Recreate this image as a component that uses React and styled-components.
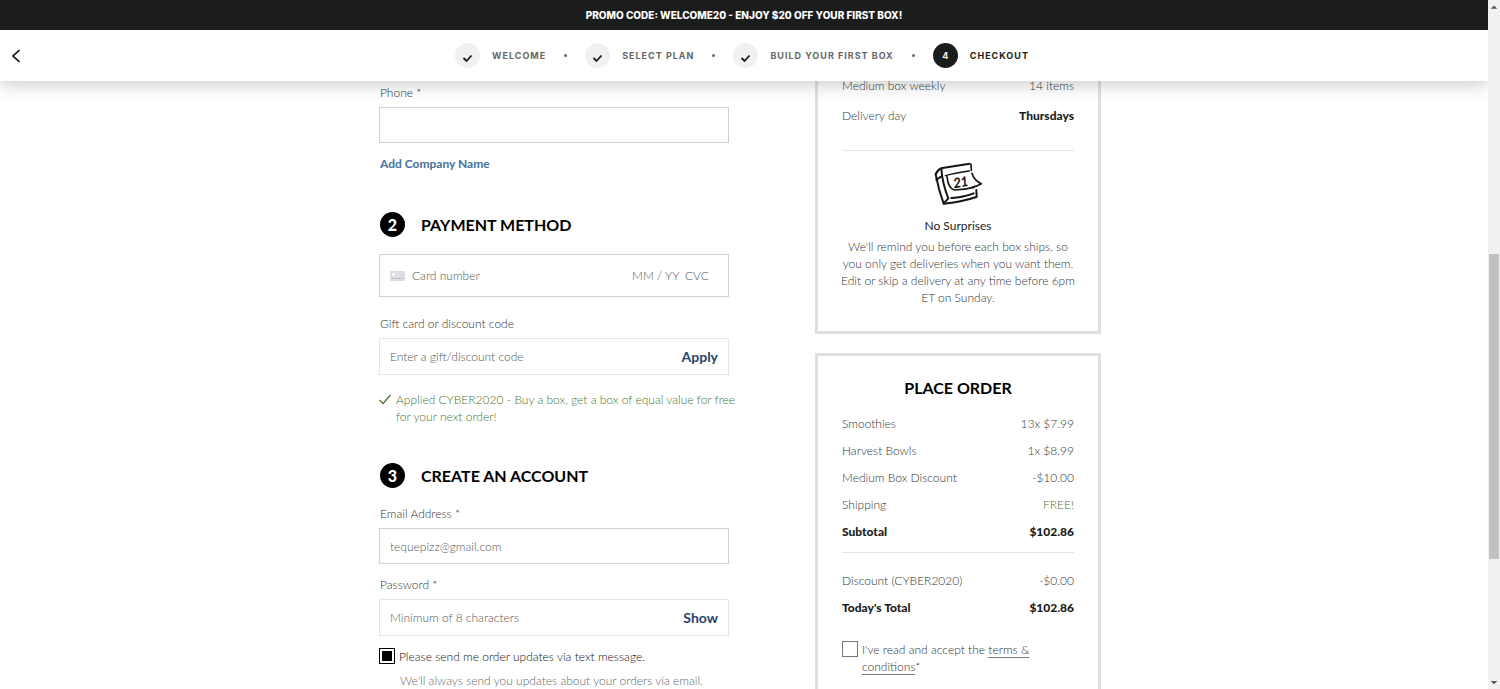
import { Fragment, useState } from 'react'
import styled, { createGlobalStyle } from 'styled-components'

const steps = ['Welcome', 'Select plan', 'Build your first box', 'Checkout']

const orderLines = [
  { name: 'Smoothies', value: '13x $7.99' },
  { name: 'Harvest Bowls', value: '1x $8.99' },
  { name: 'Medium Box Discount', value: '-$10.00' },
  { name: 'Shipping', value: 'FREE!', free: true },
  { name: 'Subtotal', value: '$102.86', bold: true },
]

const totalLines = [
  { name: 'Discount (CYBER2020)', value: '-$0.00' },
  { name: "Today's Total", value: '$102.86', bold: true },
]

export default function App() {
  return (
    <Page>
      <GlobalStyle />
      <Screen>
        <Header />
        <Main>
          <CheckoutForm />
          <Sidebar>
            <BoxSummary />
            <PlaceOrder />
          </Sidebar>
        </Main>
      </Screen>
      <ScrollTrack aria-hidden="true">
        <ScrollArrow viewBox="0 0 13 14">
          <path d="M3 9 L6.5 5.5 L10 9 Z" fill="#555" />
        </ScrollArrow>
        <ScrollThumb />
        <ScrollArrow viewBox="0 0 13 14">
          <path d="M3 6 L10 6 L6.5 9.5 Z" fill="#555" />
        </ScrollArrow>
      </ScrollTrack>
    </Page>
  )
}

function Header() {
  return (
    <HeaderWrapper>
      <Promo>Promo code: WELCOME20 - Enjoy $20 off your first box!</Promo>
      <Nav>
        <BackButton type="button" aria-label="Back">
          <svg width="10" height="16" viewBox="0 0 10 16" fill="none">
            <path d="M8.5 2 L2 8 L8.5 14" stroke="#111" strokeWidth="1.7" />
          </svg>
        </BackButton>
        <Steps>
          {steps.map((step, index) => {
            const active = index === steps.length - 1
            return (
              <Fragment key={step}>
                {index > 0 && <Dot />}
                <Step $active={active}>
                  <StepCircle $active={active}>
                    {active ? index + 1 : <StepCheck />}
                  </StepCircle>
                  {step}
                </Step>
              </Fragment>
            )
          })}
        </Steps>
      </Nav>
    </HeaderWrapper>
  )
}

function StepCheck() {
  return (
    <svg width="25" height="25" viewBox="0 0 25 25" fill="none">
      <path d="M8.5 15 L11.5 18 L16.5 12.5" stroke="#1b1d1c" strokeWidth="1.8" />
    </svg>
  )
}

function CheckoutForm() {
  const [updates, setUpdates] = useState(true)
  const [visible, setVisible] = useState(false)

  return (
    <Form onSubmit={event => event.preventDefault()}>
      <Label htmlFor="phone">Phone *</Label>
      <Field>
        <Input id="phone" type="tel" />
      </Field>
      <CompanyLink href="#company">Add Company Name</CompanyLink>

      <SectionTitle>
        <Badge>2</Badge>
        Payment method
      </SectionTitle>
      <CardField>
        <CardIcon />
        <Input aria-label="Card number" placeholder="Card number" />
        <ShortInput aria-label="Expiry date" placeholder="MM / YY" $width={53} />
        <ShortInput aria-label="CVC" placeholder="CVC" $width={35} />
      </CardField>
      <Label htmlFor="code">Gift card or discount code</Label>
      <ActionField>
        <Input id="code" placeholder="Enter a gift/discount code" />
        <FieldButton type="button">Apply</FieldButton>
      </ActionField>
      <Applied>
        <svg width="12" height="17" viewBox="0 0 12 17" fill="none">
          <path d="M0.5 9 L4 12.5 L11.5 4" stroke="#4f7438" strokeWidth="1.3" />
        </svg>
        <span>
          Applied CYBER2020 - Buy a box, get a box of equal value for free for
          your next order!
        </span>
      </Applied>

      <SectionTitle>
        <Badge>3</Badge>
        Create an account
      </SectionTitle>
      <Label htmlFor="email">Email Address *</Label>
      <Field>
        <Input id="email" type="email" placeholder="tequepizz@gmail.com" />
      </Field>
      <Label htmlFor="password">Password *</Label>
      <ActionField>
        <Input
          id="password"
          type={visible ? 'text' : 'password'}
          placeholder="Minimum of 8 characters"
        />
        <FieldButton type="button" onClick={() => setVisible(!visible)}>
          Show
        </FieldButton>
      </ActionField>
      <CheckLabel $dark>
        <Checkbox
          type="checkbox"
          checked={updates}
          onChange={() => setUpdates(!updates)}
        />
        Please send me order updates via text message.
      </CheckLabel>
      <Note>We'll always send you updates about your orders via email.</Note>
    </Form>
  )
}

function CardIcon() {
  return (
    <svg width="15" height="10" viewBox="0 0 15 10" aria-hidden="true">
      <rect width="15" height="10" rx="1" fill="#dcdee2" />
      <rect x="2" y="2" width="3" height="3" fill="#fff" />
      <path d="M2 7.5 H13" stroke="#b9bcc4" strokeDasharray="2.3 0.6" />
    </svg>
  )
}

function BoxSummary() {
  return (
    <Card>
      <Rows>
        <Row>
          <dt>Medium box weekly</dt>
          <dd>14 items</dd>
        </Row>
        <DeliveryRow>
          <dt>Delivery day</dt>
          <DeliveryDay>Thursdays</DeliveryDay>
        </DeliveryRow>
      </Rows>
      <Reminder>
        <CalendarIcon />
        <ReminderTitle>No Surprises</ReminderTitle>
        <ReminderText>
          We'll remind you before each box ships, so you only get deliveries
          when you want them. Edit or skip a delivery at any time before 6pm ET
          on Sunday.
        </ReminderText>
      </Reminder>
    </Card>
  )
}

function CalendarIcon() {
  return (
    <svg
      width="48"
      height="44"
      viewBox="0 0 144 132"
      fill="none"
      stroke="#151515"
      strokeWidth="6"
      strokeLinecap="round"
      strokeLinejoin="round"
      aria-hidden="true"
    >
      <path d="M5 37 Q10 24 21 19 Q60 12 107 5" />
      <path d="M5 37 Q14 85 29 125 Q80 121 127 105" />
      <path d="M22 21 Q26 68 43 109 L29 124" />
      <path d="M7 53 L24 42" />
      <path d="M52 108 Q88 106 119 94 M127 84 L128 104" />
      <path d="M34 41 Q62 33 106 27" strokeWidth="4" />
      <path d="M39 44 Q42 79 61 84 Q92 83 120 76" strokeWidth="5" />
      <path d="M111 7 L112 25 M114 34 Q120 56 142 65 Q130 72 116 75" strokeWidth="5" />
      <CalendarDay x="61" y="77" transform="rotate(-10 61 77)">
        21
      </CalendarDay>
    </svg>
  )
}

function PlaceOrder() {
  const [accepted, setAccepted] = useState(false)

  return (
    <OrderCard>
      <OrderTitle>Place order</OrderTitle>
      <OrderRows lines={orderLines} />
      <Divider />
      <OrderRows lines={totalLines} />
      <TermsLabel>
        <Checkbox
          type="checkbox"
          checked={accepted}
          onChange={() => setAccepted(!accepted)}
        />
        <TermsText>
          I've read and accept the{' '}
          <TermsLink href="#terms">terms & conditions</TermsLink>*
        </TermsText>
      </TermsLabel>
    </OrderCard>
  )
}

function OrderRows({ lines }) {
  return (
    <Rows>
      {lines.map(({ name, value, bold, free }) => (
        <Row key={name} $bold={bold}>
          <dt>{name}</dt>
          <Value $free={free}>{value}</Value>
        </Row>
      ))}
    </Rows>
  )
}

const GlobalStyle = createGlobalStyle`
  * {
    box-sizing: border-box;
  }
  body {
    margin: 0;
    background: white;
    color: #333535;
    font-family: Lato, 'Open Sans', sans-serif;
    font-size: 12px;
    font-weight: 300;
    line-height: 17px;
  }
  h2, h3, p, dl, dd, ol {
    margin: 0;
    padding: 0;
  }
`
const Page = styled.div`
  display: grid;
  grid-template-columns: minmax(0, 1fr) 12px;
  height: 100vh;
  overflow: hidden;
`
const Screen = styled.div`
  min-height: 0;
  overflow: hidden;
`
const ScrollTrack = styled.div`
  display: flex;
  flex-direction: column;
  min-height: 0;
  background: #f1f1f1;
`
const ScrollArrow = styled.svg`
  flex: none;
  width: 12px;
  height: 14px;
`
const ScrollThumb = styled.div`
  flex: 0 0 305px;
  margin: 240px 1px auto;
  background: #c1c1c1;
`
const HeaderWrapper = styled.header`
  position: relative;
  z-index: 1;
  background: white;
  box-shadow: 0 4px 16px rgba(0, 0, 0, 0.2);
  font-family: Inter, sans-serif;
  text-transform: uppercase;
`
const Promo = styled.p`
  padding: 7px 0 6px;
  background: #1b1d1c;
  color: white;
  font-size: 10px;
  font-weight: 800;
  text-align: center;
`
const Nav = styled.nav`
  display: grid;
  grid-template-columns: 32px 1fr 36px;
  align-items: center;
  height: 51px;
`
const BackButton = styled.button`
  display: flex;
  padding: 0 11px;
  border: 0;
  background: none;
`
const Steps = styled.ol`
  display: flex;
  align-items: center;
  justify-content: center;
  gap: 18px;
  list-style: none;
`
const Step = styled.li`
  display: flex;
  align-items: center;
  gap: 12px;
  color: ${props => (props.$active ? '#1b1d1c' : '#666')};
  font-size: 9px;
  font-weight: 700;
  letter-spacing: 1px;
`
const StepCircle = styled.span`
  display: grid;
  place-items: center;
  width: 25px;
  height: 25px;
  border-radius: 50%;
  background: ${props => (props.$active ? '#1b1d1c' : '#f0f1f1')};
  color: white;
  letter-spacing: 0;
`
const Dot = styled.li`
  width: 3px;
  height: 3px;
  border-radius: 50%;
  background: #666;
`
const Main = styled.main`
  display: grid;
  grid-template-columns: 350px 286px;
  justify-content: space-between;
  width: 730px;
  max-width: 100%;
  margin: -20px auto 0;
  padding-right: 8px;
`
const Form = styled.form`
  display: flex;
  flex-direction: column;
  padding-top: 23px;
`
const Label = styled.label`
  margin-bottom: 6px;
  padding-left: 1px;
`
const Field = styled.div`
  display: flex;
  align-items: center;
  height: 36px;
  margin-bottom: 12px;
  padding: 0 10px;
  border: 1px solid #cfd1d1;
`
const ActionField = styled(Field)`
  height: 37px;
  border-color: #e4e5e5;
`
const CardField = styled(Field)`
  height: 43px;
  margin-bottom: 18px;
  padding-right: 8px;

  > svg {
    margin-right: 7px;
  }
`
const Input = styled.input`
  flex: 1;
  min-width: 0;
  padding: 0;
  border: 0;
  outline: 0;
  background: none;
  color: #333;
  font: inherit;

  &::placeholder {
    color: #555758;
    opacity: 1;
  }
`
const ShortInput = styled(Input)`
  flex: none;
  width: ${props => props.$width}px;
`
const FieldButton = styled.button`
  padding: 0;
  border: 0;
  background: none;
  color: #26456e;
  font: inherit;
  font-size: 14px;
  font-weight: 700;
`
const CompanyLink = styled.a`
  align-self: flex-start;
  margin-bottom: 2px;
  padding-left: 1px;
  color: #46709c;
  font-weight: 700;
  text-decoration: none;
`
const SectionTitle = styled.h2`
  display: flex;
  align-items: center;
  gap: 16px;
  margin: 38px 0 17px 1px;
  color: black;
  font-size: 16px;
  font-weight: 700;
  text-transform: uppercase;
`
const Badge = styled.span`
  display: grid;
  place-items: center;
  width: 25px;
  height: 25px;
  border-radius: 50%;
  background: black;
  color: white;
  font-weight: 900;
`
const Applied = styled.p`
  display: flex;
  gap: 5px;
  margin: 4px -12px 0 0;
  color: #4c7332;

  > svg {
    flex: none;
  }
`
const CheckLabel = styled.label`
  display: flex;
  gap: 4px;
  color: ${props => (props.$dark ? '#111' : 'inherit')};
`
const Checkbox = styled.input`
  appearance: none;
  flex: none;
  width: 16px;
  height: 16px;
  margin: 0;
  border: 1px solid #777;
  background: white;

  &:checked {
    border-color: black;
    background: black;
    box-shadow: inset 0 0 0 2px white;
  }
`
const Note = styled.p`
  margin-top: 7px;
  padding-left: 21px;
  color: #666869;
`
const Sidebar = styled.aside`
  display: flex;
  flex-direction: column;
  gap: 19px;
`
const Card = styled.section`
  padding: 13px 24px 25px;
  border: 3px solid #e0e0e0;
`
const OrderCard = styled(Card)`
  padding-top: 22px;
`
const Rows = styled.dl`
  display: flex;
  flex-direction: column;
  gap: 10px;
`
const Row = styled.div`
  display: flex;
  justify-content: space-between;
  color: ${props => (props.$bold ? '#1b1d1c' : 'inherit')};
  font-weight: ${props => (props.$bold ? 900 : 300)};
`
const DeliveryRow = styled(Row)`
  padding: 3px 0 26px;
  border-bottom: 1px solid #e4e5e5;
`
const DeliveryDay = styled.dd`
  color: #1b1d1c;
  font-weight: 900;
`
const Value = styled.dd`
  color: ${props => (props.$free ? '#557038' : 'inherit')};
`
const Reminder = styled.div`
  display: flex;
  flex-direction: column;
  align-items: center;
  padding-top: 11px;
  text-align: center;
`
const ReminderTitle = styled.h3`
  margin: 11px 0 4px;
  color: #1b1d1c;
  font-size: 12px;
  font-weight: 400;
`
const ReminderText = styled.p`
  margin: 0 -3px;
`
const CalendarDay = styled.text`
  fill: white;
  stroke-width: 3px;
  font-size: 38px;
  font-style: italic;
`
const OrderTitle = styled.h2`
  margin-bottom: 18px;
  color: black;
  font-size: 16px;
  font-weight: 700;
  line-height: 19px;
  text-align: center;
  text-transform: uppercase;
`
const Divider = styled.hr`
  margin: 12px 0 19px;
  border: 0;
  border-top: 1px solid #e4e5e5;
`
const TermsLabel = styled(CheckLabel)`
  margin-top: 25px;
`
const TermsText = styled.span`
  max-width: 180px;
`
const TermsLink = styled.a`
  border-bottom: 1px solid #777;
  color: inherit;
  text-decoration: none;
`
